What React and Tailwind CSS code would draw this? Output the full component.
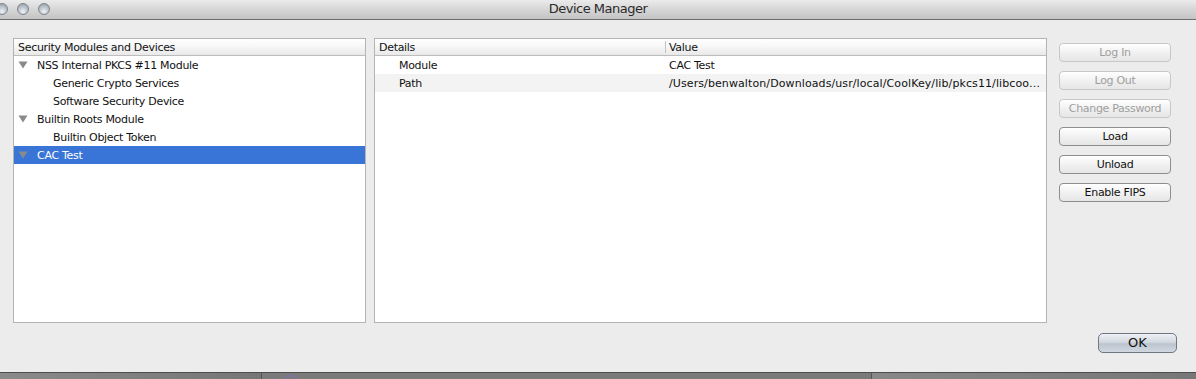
import React from "react";

const font = { fontFamily: '"DejaVu Sans", "Liberation Sans", sans-serif' };

function Tri() {
  return (
    <svg width="10" height="8" viewBox="0 0 10 8" className="shrink-0">
      <polygon points="0.5,0.5 9.5,0.5 5,7.5" fill="#8a8a8a" />
    </svg>
  );
}

function TreeRow({ label, level, selected }) {
  return (
    <div
      className={`h-[18px] flex items-center ${selected ? "bg-[#3875d7] text-white" : "text-[#111]"}`}
    >
      {level === 0 ? (
        <div className="flex items-center pl-[4px] gap-[9px]">
          <Tri />
          <span className="pt-[2px]">{label}</span>
        </div>
      ) : (
        <span className="pl-[39px] pt-[2px]">{label}</span>
      )}
    </div>
  );
}

function Btn({ label, disabled }) {
  return (
    <div
      className={`h-[19px] w-[112px] rounded-[4px] border flex items-center justify-center pt-[1px] bg-[linear-gradient(#ffffff,#f1f1f1_50%,#e6e6e6)] ${
        disabled ? "border-[#c8c8c8] text-[#9e9e9e]" : "border-[#8e8e8e] text-[#111]"
      }`}
    >
      {label}
    </div>
  );
}

function Light() {
  return (
    <div className="w-[12px] h-[12px] rounded-full border border-[#7c848d] bg-[radial-gradient(circle_at_50%_75%,#eef2f6,#b3bbc4_60%,#8d96a0)] shrink-0" />
  );
}

export default function App() {
  return (
    <div
      className="w-[1196px] h-[379px] bg-[#7b7b7b] relative overflow-hidden text-[11px] tracking-[-0.3px]"
      style={font}
    >
      <div className="h-[373px] bg-[#ececec] border-b border-[#4d4d4d] flex flex-col">
        {/* title bar */}
        <div className="h-[20px] shrink-0 border-b border-[#6e6e6e] bg-[linear-gradient(#ebebeb,#d6d6d6_50%,#c4c4c4)] relative flex items-center">
          <div className="flex items-center gap-[9px] ml-[-4px] mt-[-2px]">
            <Light />
            <Light />
            <Light />
          </div>
          <div className="absolute inset-0 flex items-center justify-center text-[13px] tracking-[-0.5px] text-[#2a2a2a] pb-[1px]">
            Device Manager
          </div>
        </div>

        {/* content */}
        <div className="flex pt-[18px] pl-[13px]">
          {/* left panel */}
          <div className="w-[353px] h-[285px] border border-[#b4b4b4] bg-white flex flex-col">
            <div className="h-[17px] border-b border-[#bdbdbd] bg-[linear-gradient(#ffffff,#f6f6f6_50%,#e9e9e9)] flex items-center pl-[4px] pt-[2px] text-[#111]">
              Security Modules and Devices
            </div>
            <TreeRow label="NSS Internal PKCS #11 Module" level={0} />
            <TreeRow label="Generic Crypto Services" level={1} />
            <TreeRow label="Software Security Device" level={1} />
            <TreeRow label="Builtin Roots Module" level={0} />
            <TreeRow label="Builtin Object Token" level={1} />
            <TreeRow label="CAC Test" level={0} selected />
          </div>

          {/* right panel */}
          <div className="ml-[8px] w-[673px] h-[285px] border border-[#b4b4b4] bg-white flex flex-col">
            <div className="h-[17px] border-b border-[#bdbdbd] bg-[linear-gradient(#ffffff,#f6f6f6_50%,#e9e9e9)] flex items-center text-[#111]">
              <div className="w-[290px] pl-[4px] pt-[2px]">Details</div>
              <div className="w-px h-[12px] bg-[#c4c4c4]" />
              <div className="pl-[3px] pt-[2px]">Value</div>
            </div>
            <div className="h-[18px] flex items-center pt-[2px] text-[#111]">
              <div className="w-[291px] pl-[24px]">Module</div>
              <div className="pl-[3px]">CAC Test</div>
            </div>
            <div className="h-[18px] flex items-center pt-[2px] text-[#111] bg-[#f3f3f3]">
              <div className="w-[291px] pl-[24px]">Path</div>
              <div className="pl-[3px] whitespace-nowrap overflow-hidden w-[378px] tracking-[0.1px]">
                /Users/benwalton/Downloads/usr/local/CoolKey/lib/pkcs11/libcoo…
              </div>
            </div>
          </div>

          {/* buttons */}
          <div className="ml-[12px] pt-[5px] flex flex-col gap-[9px]">
            <Btn label="Log In" disabled />
            <Btn label="Log Out" disabled />
            <Btn label="Change Password" disabled />
            <Btn label="Load" />
            <Btn label="Unload" />
            <Btn label="Enable FIPS" />
          </div>
        </div>

        {/* OK */}
        <div className="flex justify-end pr-[19px] pt-[10px]">
          <div className="w-[79px] h-[20px] rounded-[5px] border border-[#6f7782] bg-[linear-gradient(#eef1f5,#d3d9e0_45%,#bcc5cf_55%,#d0d7df)] flex items-center justify-center text-[13px] tracking-normal text-[#111]">
            OK
          </div>
        </div>
      </div>

      {/* background strip */}
      <div className="h-[6px] flex">
        <div className="w-[262px] bg-[linear-gradient(90deg,#8a8a8a,#767676)] border-r border-[#555]" />
        <div className="w-[610px] bg-[#7a7a7a] border-r border-[#555]" />
        <div className="flex-1 bg-[linear-gradient(90deg,#888,#777)]" />
      </div>
      <div className="absolute left-[283px] top-[375px] w-[16px] h-[16px] rounded-full border border-[#8b6cc0]" />
    </div>
  );
}
